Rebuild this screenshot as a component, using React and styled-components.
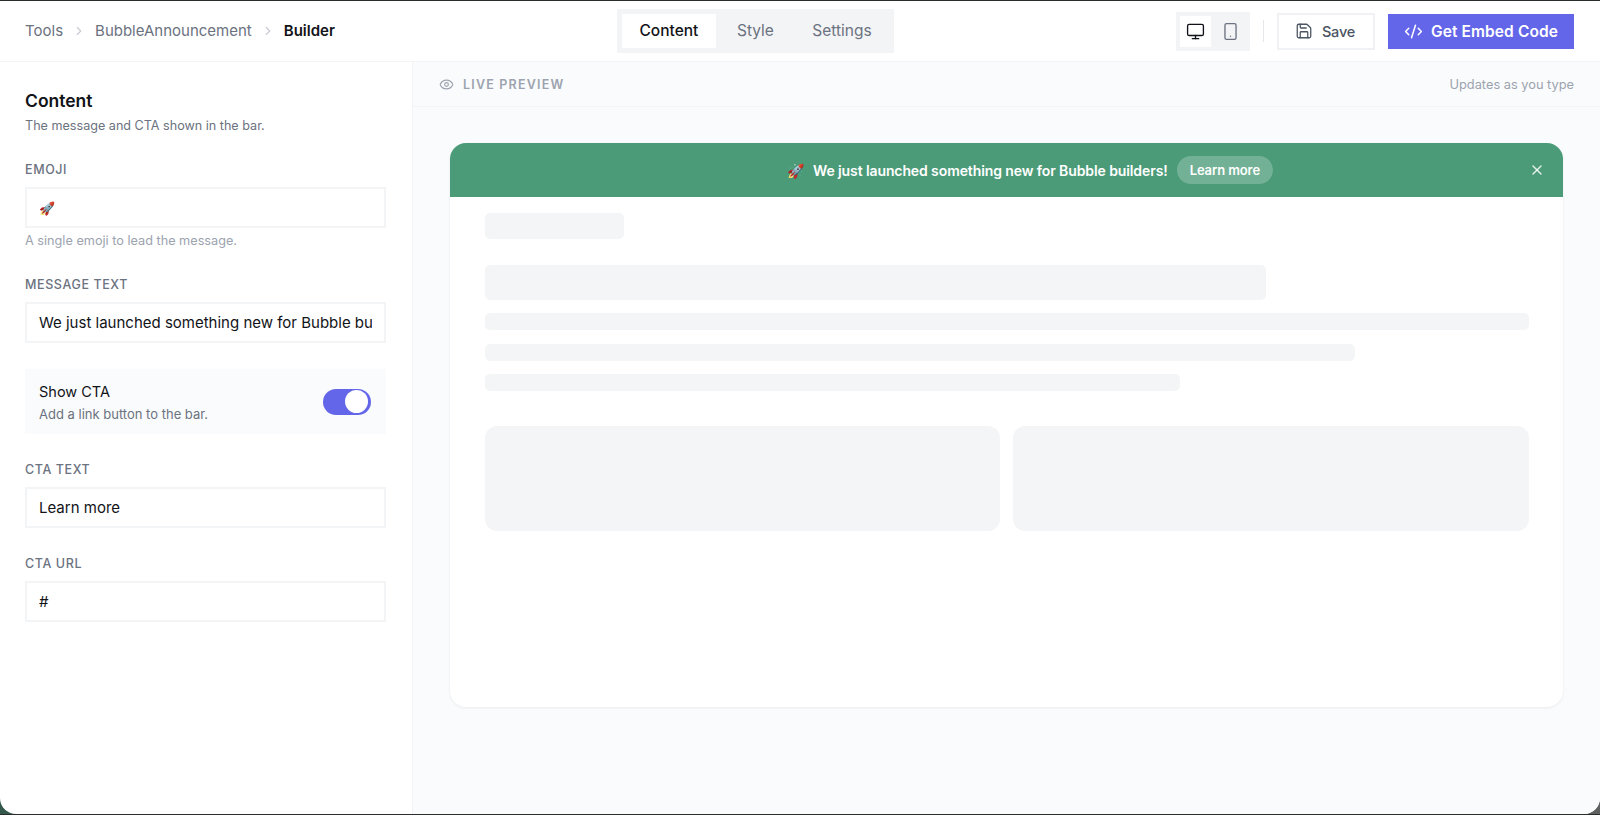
import React from 'react';
import styled, { createGlobalStyle } from 'styled-components';
import { ChevronRight, CodeXml, Eye, Monitor, Save, Smartphone, X } from 'lucide-react';

const GlobalStyle = createGlobalStyle`
  html, body {
    margin: 0;
    height: 100%;
    background: #2a2f2e;
  }
  * {
    box-sizing: border-box;
  }
  body {
    font-family: Inter, "Liberation Sans", sans-serif;
    color: #111318;
  }
`;

const Window = styled.div`
  height: 815px;
  background: linear-gradient(90deg, #35584c 0%, #4a5553 50%, #5e6160 100%);
  border-top: 1px solid #2a2f2e;
  border-bottom: 1px solid #2a2f2e;
`;

const Frame = styled.div`
  height: 813px;
  display: flex;
  flex-direction: column;
  background: #fff;
  border-radius: 0 0 16px 16px;
  overflow: hidden;
`;

const Header = styled.header`
  height: 61px;
  flex: none;
  display: flex;
  align-items: center;
  justify-content: space-between;
  padding: 0 26px 0 25px;
  border-bottom: 1px solid #f3f4f6;
`;

const Crumbs = styled.nav`
  display: flex;
  align-items: center;
  gap: 9px;
  padding-bottom: 1px;
  font-size: 15px;
  color: #6b7280;
  svg {
    color: #c9ccd3;
  }
`;

const CurrentCrumb = styled.span`
  color: #111318;
  font-weight: 600;
`;

const Tabs = styled.div`
  display: flex;
  padding: 5px;
  height: 44px;
  background: #f3f4f6;
`;

const Tab = styled.button`
  border: 0;
  padding: 0 0 1px;
  width: ${(p) => p.$width}px;
  font: inherit;
  font-size: 15.5px;
  font-weight: ${(p) => (p.$active ? 500 : 400)};
  color: ${(p) => (p.$active ? '#111318' : '#6b7280')};
  background: ${(p) => (p.$active ? '#fff' : 'transparent')};
`;

const Actions = styled.div`
  display: flex;
  align-items: center;
  justify-content: flex-end;
`;

const DeviceToggle = styled.div`
  display: flex;
  padding: 4px;
  background: #f3f4f6;
`;

const DeviceButton = styled.button`
  width: ${(p) => (p.$active ? 31 : 35)}px;
  height: 31px;
  border: 0;
  padding: ${(p) => (p.$active ? 0 : '0 0 0 4px')};
  display: flex;
  align-items: center;
  justify-content: center;
  background: ${(p) => (p.$active ? '#fff' : 'transparent')};
  color: ${(p) => (p.$active ? '#111318' : '#6b7280')};
`;

const Divider = styled.div`
  width: 1px;
  height: 22px;
  margin: 0 13px;
  background: #e5e7eb;
`;

const SaveButton = styled.button`
  width: 98px;
  height: 37px;
  margin-right: 13px;
  display: flex;
  align-items: center;
  justify-content: center;
  gap: 9px;
  padding: 0 2px 0 0;
  font: inherit;
  font-size: 14.5px;
  font-weight: 500;
  letter-spacing: -0.2px;
  color: #4b5563;
  background: #fff;
  border: 2px solid #f0f1f4;
`;

const EmbedButton = styled.button`
  width: 186px;
  height: 35px;
  display: flex;
  align-items: center;
  justify-content: center;
  gap: 8px;
  padding: 0;
  border: 0;
  font: inherit;
  font-size: 15.5px;
  font-weight: 600;
  letter-spacing: 0.1px;
  color: #fff;
  background: #6366e8;
`;

const Body = styled.div`
  flex: 1;
  min-height: 0;
  display: flex;
`;

const Sidebar = styled.aside`
  width: 413px;
  flex: none;
  padding: 29px 26px 0 25px;
  border-right: 1px solid #f3f4f6;
`;

const PanelTitle = styled.h2`
  margin: 0;
  font-size: 17.5px;
  line-height: 20px;
  font-weight: 600;
`;

const PanelSubtitle = styled.p`
  margin: 7px 0 0;
  font-size: 12.6px;
  line-height: 16px;
  color: #6b7280;
`;

const Field = styled.div`
  margin-top: 28px;
`;

const Label = styled.label`
  display: block;
  margin-bottom: 9px;
  font-size: 12.5px;
  line-height: 16px;
  font-weight: 500;
  letter-spacing: 0.6px;
  color: #6b7280;
`;

const Input = styled.input`
  display: block;
  width: 100%;
  height: 41px;
  padding: 0 12px;
  font: inherit;
  font-size: ${(p) => (p.$emoji ? 13 : 15)}px;
  color: #111318;
  background: #fff;
  border: 2px solid #f3f4f6;
  border-radius: 0;
  outline: none;
`;

const Hint = styled.p`
  margin: 5px 0 0;
  font-size: 12.7px;
  line-height: 16px;
  color: #9ca3af;
`;

const ToggleRow = styled.div`
  height: 65px;
  margin-top: 26px;
  padding: 0 15px 0 14px;
  display: flex;
  align-items: center;
  justify-content: space-between;
  background: #fafbfc;
`;

const ToggleTitle = styled.div`
  font-size: 14.5px;
  line-height: 20px;
  color: #111318;
`;

const ToggleHint = styled.div`
  margin-top: 4px;
  font-size: 13px;
  line-height: 16px;
  color: #6b7280;
`;

const Switch = styled.div`
  width: 48px;
  height: 26px;
  padding-right: 3px;
  display: flex;
  align-items: center;
  justify-content: flex-end;
  background: #6366e8;
  border-radius: 13px;
`;

const Knob = styled.div`
  width: 23px;
  height: 23px;
  border-radius: 50%;
  background: #fff;
`;

const Preview = styled.main`
  flex: 1;
  min-width: 0;
  background: #fafbfc;
`;

const PreviewBar = styled.div`
  height: 45px;
  display: flex;
  align-items: center;
  justify-content: space-between;
  padding: 0 26px 0 26px;
  border-bottom: 1px solid #f3f4f6;
`;

const LiveLabel = styled.div`
  display: flex;
  align-items: center;
  gap: 9px;
  font-size: 12.5px;
  font-weight: 600;
  letter-spacing: 1.2px;
  color: #9ca3af;
`;

const UpdatesNote = styled.div`
  font-size: 12.8px;
  color: #9ca3af;
`;

const Stage = styled.div`
  padding: 36px 37px 0 37px;
`;

const Card = styled.section`
  height: 564px;
  background: #fff;
  border-radius: 16px;
  overflow: hidden;
  box-shadow: 0 1px 3px rgba(17, 24, 39, 0.07);
`;

const AnnounceBar = styled.div`
  position: relative;
  height: 54px;
  padding-left: 47px;
  display: flex;
  align-items: center;
  justify-content: center;
  gap: 9px;
  font-size: 14px;
  font-weight: 600;
  letter-spacing: -0.1px;
  color: #fff;
  background: #4b9b78;
`;

const CtaPill = styled.span`
  height: 28px;
  padding: 0 13px;
  display: flex;
  align-items: center;
  font-size: 13px;
  font-weight: 600;
  letter-spacing: -0.1px;
  background: rgba(255, 255, 255, 0.22);
  border-radius: 14px;
`;

const CloseButton = styled.span`
  position: absolute;
  right: 18px;
  top: 19px;
  display: flex;
  color: rgba(255, 255, 255, 0.85);
`;

const Skeletons = styled.div`
  padding: 16px 34px 0 35px;
`;

const Bone = styled.div`
  height: ${(p) => p.$h}px;
  width: ${(p) => p.$w};
  margin-top: ${(p) => p.$top || 0}px;
  background: #f4f5f6;
  border-radius: 5px;
`;

const BoneGrid = styled.div`
  display: grid;
  grid-template-columns: 515px 1fr;
  gap: 13px;
  margin-top: 35px;
`;

const BoneCard = styled.div`
  height: 105px;
  background: #f4f5f6;
  border-radius: 12px;
`;

export default function App() {
  return (
    <Window>
      <GlobalStyle />
      <Frame>
        <Header>
          <Crumbs>
            <span>Tools</span>
            <ChevronRight size={14} />
            <span>BubbleAnnouncement</span>
            <ChevronRight size={14} />
            <CurrentCrumb>Builder</CurrentCrumb>
          </Crumbs>
          <Tabs>
            <Tab $active $width={94}>Content</Tab>
            <Tab $width={79}>Style</Tab>
            <Tab $width={94}>Settings</Tab>
          </Tabs>
          <Actions>
            <DeviceToggle>
              <DeviceButton $active><Monitor size={19} strokeWidth={1.7} /></DeviceButton>
              <DeviceButton><Smartphone size={19} strokeWidth={1.7} /></DeviceButton>
            </DeviceToggle>
            <Divider />
            <SaveButton><Save size={18} strokeWidth={1.7} />Save</SaveButton>
            <EmbedButton><CodeXml size={19} strokeWidth={1.9} />Get Embed Code</EmbedButton>
          </Actions>
        </Header>
        <Body>
          <Sidebar>
            <PanelTitle>Content</PanelTitle>
            <PanelSubtitle>The message and CTA shown in the bar.</PanelSubtitle>
            <Field>
              <Label>EMOJI</Label>
              <Input $emoji readOnly value="🚀" />
              <Hint>A single emoji to lead the message.</Hint>
            </Field>
            <Field>
              <Label>MESSAGE TEXT</Label>
              <Input readOnly value="We just launched something new for Bubble builders!" />
            </Field>
            <ToggleRow>
              <div>
                <ToggleTitle>Show CTA</ToggleTitle>
                <ToggleHint>Add a link button to the bar.</ToggleHint>
              </div>
              <Switch><Knob /></Switch>
            </ToggleRow>
            <Field>
              <Label>CTA TEXT</Label>
              <Input readOnly value="Learn more" />
            </Field>
            <Field>
              <Label>CTA URL</Label>
              <Input readOnly value="#" />
            </Field>
          </Sidebar>
          <Preview>
            <PreviewBar>
              <LiveLabel><Eye size={15} strokeWidth={1.8} />LIVE PREVIEW</LiveLabel>
              <UpdatesNote>Updates as you type</UpdatesNote>
            </PreviewBar>
            <Stage>
              <Card>
                <AnnounceBar>
                  <span>🚀</span>
                  <span>We just launched something new for Bubble builders!</span>
                  <CtaPill>Learn more</CtaPill>
                  <CloseButton><X size={16} /></CloseButton>
                </AnnounceBar>
                <Skeletons>
                  <Bone $h={26} $w="139px" />
                  <Bone $h={35} $w="74.85%" $top={26} />
                  <Bone $h={17} $w="100%" $top={13} />
                  <Bone $h={17} $w="83.3%" $top={13.6} />
                  <Bone $h={17} $w="66.6%" $top={13.6} />
                  <BoneGrid>
                    <BoneCard />
                    <BoneCard />
                  </BoneGrid>
                </Skeletons>
              </Card>
            </Stage>
          </Preview>
        </Body>
      </Frame>
    </Window>
  );
}
